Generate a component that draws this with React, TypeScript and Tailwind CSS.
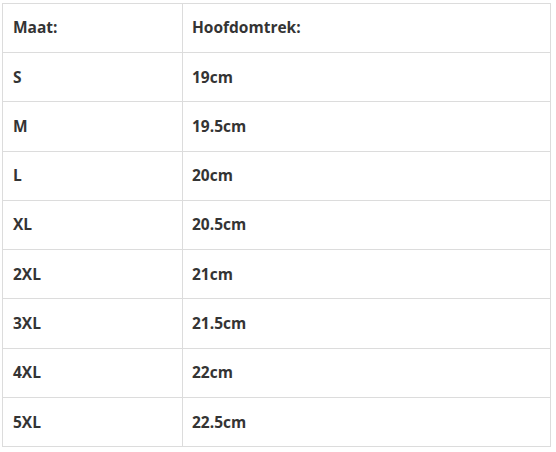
import React from 'react';

const rows: [string, string][] = [
  ['S', '19cm'],
  ['M', '19.5cm'],
  ['L', '20cm'],
  ['XL', '20.5cm'],
  ['2XL', '21cm'],
  ['3XL', '21.5cm'],
  ['4XL', '22cm'],
  ['5XL', '22.5cm'],
];

export default function App() {
  return (
    <div className="w-[556px] h-[452px] bg-white pl-[2px] pt-[3px]" style={{ fontFamily: '"Open Sans", "Noto Sans", sans-serif' }}>
      <table className="w-[549px] border-collapse text-[15.5px] font-bold text-[#343434]">
        <thead>
          <tr className="h-[49px]">
            <td className="w-[180px] border border-[#dcdcdc] pl-[10px]">Maat:</td>
            <td className="border border-[#dcdcdc] pl-[9px]">Hoofdomtrek:</td>
          </tr>
        </thead>
        <tbody>
          {rows.map(([size, head]) => (
            <tr key={size} className="h-[49.3px]">
              <td className="border border-[#dcdcdc] pl-[10px]">{size}</td>
              <td className="border border-[#dcdcdc] pl-[9px]">{head}</td>
            </tr>
          ))}
        </tbody>
      </table>
    </div>
  );
}
